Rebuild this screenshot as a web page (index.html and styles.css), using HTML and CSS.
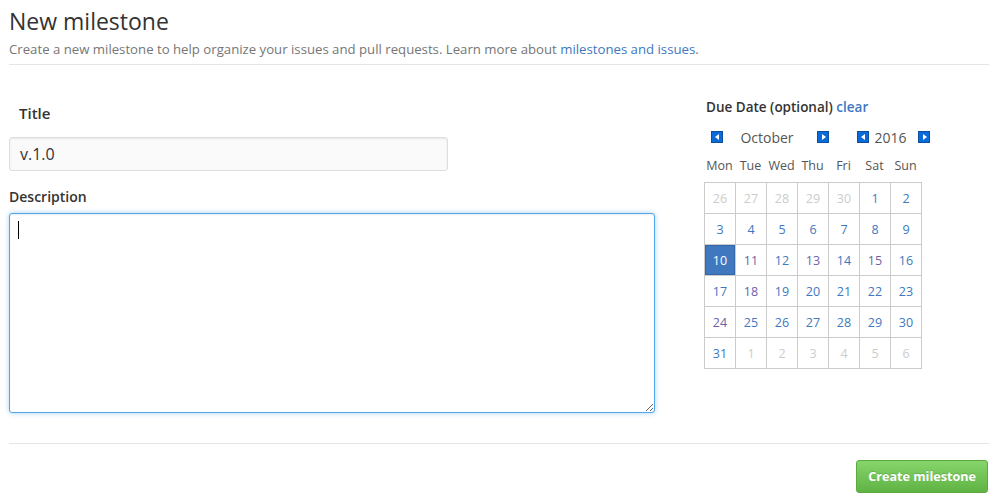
FILE: index.html
```html
<!DOCTYPE html>
<html>
<head>
<meta charset="utf-8">
<link rel="stylesheet" href="styles.css">
</head>
<body>
<div class="page">
  <div class="subhead">
    <h2 class="subhead-heading">New milestone</h2>
    <p class="subhead-desc">Create a new milestone to help organize your issues and pull requests. Learn more about <a href="#">milestones and issues</a>.</p>
  </div>
  <div class="main">
    <div class="left">
      <label class="title-label">Title</label>
      <input class="title-input" type="text" value="v.1.0">
      <label class="desc-label">Description</label>
      <div class="ta-wrap">
        <textarea class="desc-input"></textarea>
        <span class="caret"></span>
      </div>
    </div>
    <div class="right">
      <div class="due-label">Due Date (optional) <a href="#">clear</a></div>
      <div class="cal-nav">
        <span class="navbtn prev"></span>
        <span class="month">October</span>
        <span class="navbtn next"></span>
        <span class="navbtn prev yprev"></span>
        <span class="year">2016</span>
        <span class="navbtn next"></span>
      </div>
      <div class="weekdays">
        <span>Mon</span><span>Tue</span><span>Wed</span><span>Thu</span><span>Fri</span><span>Sat</span><span>Sun</span>
      </div>
      <div class="cal-grid">
        <span class="d other">26</span><span class="d other">27</span><span class="d other">28</span><span class="d other">29</span><span class="d other">30</span><span class="d">1</span><span class="d">2</span>
        <span class="d">3</span><span class="d">4</span><span class="d">5</span><span class="d">6</span><span class="d">7</span><span class="d">8</span><span class="d">9</span>
        <span class="d sel">10</span><span class="d v">11</span><span class="d">12</span><span class="d v">13</span><span class="d">14</span><span class="d v">15</span><span class="d">16</span>
        <span class="d">17</span><span class="d v">18</span><span class="d">19</span><span class="d">20</span><span class="d">21</span><span class="d">22</span><span class="d">23</span>
        <span class="d v">24</span><span class="d">25</span><span class="d">26</span><span class="d">27</span><span class="d">28</span><span class="d">29</span><span class="d">30</span>
        <span class="d">31</span><span class="d other">1</span><span class="d other">2</span><span class="d other">3</span><span class="d other">4</span><span class="d other">5</span><span class="d other">6</span>
      </div>
    </div>
  </div>
  <div class="footer">
    <button class="btn-primary">Create milestone</button>
  </div>
</div>
</body>
</html>
```
FILE: styles.css
```css
* { box-sizing: border-box; }
html, body { margin: 0; padding: 0; background: #fff; }
body {
  font-family: "Open Sans", "Noto Sans", sans-serif;
  font-size: 14px;
  color: #333;
}
a { color: #4078c0; text-decoration: none; }
.page { padding: 0 9px; }
.subhead { border-bottom: 1px solid #e5e5e5; padding-bottom: 5px; }
.subhead-heading {
  margin: 0;
  padding-top: 6px;
  font-size: 23px;
  line-height: 30px;
  font-weight: 400;
  color: #333;
}
.subhead-desc {
  margin: 3px 0 0;
  font-size: 13.2px;
  line-height: 20px;
  color: #767676;
}
.main { display: flex; padding-top: 28px; }
.left { width: 646px; display: flex; flex-direction: column; align-items: flex-start; }
.title-label {
  font-weight: 600;
  font-size: 15px;
  line-height: 20px;
  margin: 10px 0 0 10px;
}
.title-input {
  margin-top: 14px;
  width: 439px;
  height: 34px;
  padding: 0 10px;
  font-family: inherit;
  font-size: 16px;
  color: #333;
  background: #fafafa;
  border: 1px solid #ddd;
  border-radius: 3px;
  box-shadow: inset 0 1px 2px rgba(0,0,0,0.075);
  outline: none;
}
.desc-label {
  font-weight: 600;
  font-size: 14px;
  line-height: 20px;
  margin-top: 16px;
}
.ta-wrap { position: relative; margin-top: 6px; width: 646px; }
.desc-input {
  display: block;
  width: 646px;
  height: 200px;
  border: 1px solid #51a7e8;
  border-radius: 3px;
  box-shadow: inset 0 1px 2px rgba(0,0,0,0.075), 0 0 5px rgba(81,167,232,0.5);
  outline: none;
  background: #fff;
  font-family: inherit;
  font-size: 14px;
  resize: vertical;
}
.caret {
  position: absolute;
  left: 9px;
  top: 8px;
  width: 1px;
  height: 18px;
  background: #000;
}
.right { margin-left: 49px; width: 230px; }
.due-label {
  font-weight: 600;
  font-size: 13.5px;
  line-height: 20px;
  margin: 4px 0 0 2px;
  color: #333;
}
.due-label a { font-weight: 600; }
.cal-nav {
  display: flex;
  align-items: center;
  margin-top: 10px;
  height: 20px;
  padding-left: 7px;
  color: #555;
}
.navbtn {
  width: 12px;
  height: 12px;
  background: #0a6ad8;
  border: 1px solid #0b4fa0;
  position: relative;
  flex: none;
}
.navbtn::after {
  content: "";
  position: absolute;
  top: 2px;
  width: 0; height: 0;
  border-top: 3px solid transparent;
  border-bottom: 3px solid transparent;
}
.navbtn.prev::after { left: 3px; border-right: 4px solid #fff; }
.navbtn.next::after { left: 4px; border-left: 4px solid #fff; }
.month { width: 94px; text-align: center; padding-right: 6px; font-size: 14px; }
.yprev { margin-left: 28px; }
.year { width: 49px; text-align: center; padding-right: 6px; font-size: 14px; }
.weekdays {
  display: grid;
  grid-template-columns: repeat(7, 31px);
  margin-top: 11px;
  font-size: 12.5px;
  line-height: 16px;
  color: #555;
}
.weekdays span { text-align: center; }
.cal-grid {
  display: grid;
  grid-template-columns: repeat(7, 31px);
  grid-auto-rows: 31px;
  width: 218px;
  border-top: 1px solid #ccc;
  border-left: 1px solid #ccc;
  margin-top: 8px;
}
.d {
  border-right: 1px solid #ccc;
  border-bottom: 1px solid #ccc;
  display: flex;
  align-items: center;
  justify-content: center;
  font-size: 12.5px;
  color: #4078c0;
}
.d.v { color: #6e5fa8; }
.d.other { color: #ccc; }
.d.sel { background: #4078c0; color: #fff; box-shadow: inset 0 0 0 1px #3566a8; }
.footer {
  margin-top: 30px;
  border-top: 1px solid #e5e5e5;
  padding-top: 16px;
  display: flex;
  justify-content: flex-end;
}
.btn-primary {
  margin-right: 1px;
  height: 33px;
  padding: 0 11px;
  font-family: inherit;
  font-size: 12.6px;
  font-weight: 700;
  color: #fff;
  text-shadow: 0 -1px 0 rgba(0,0,0,0.15);
  background: linear-gradient(#86d56b, #5fb343);
  border: 1px solid #5ca941;
  border-radius: 3px;
}
```
